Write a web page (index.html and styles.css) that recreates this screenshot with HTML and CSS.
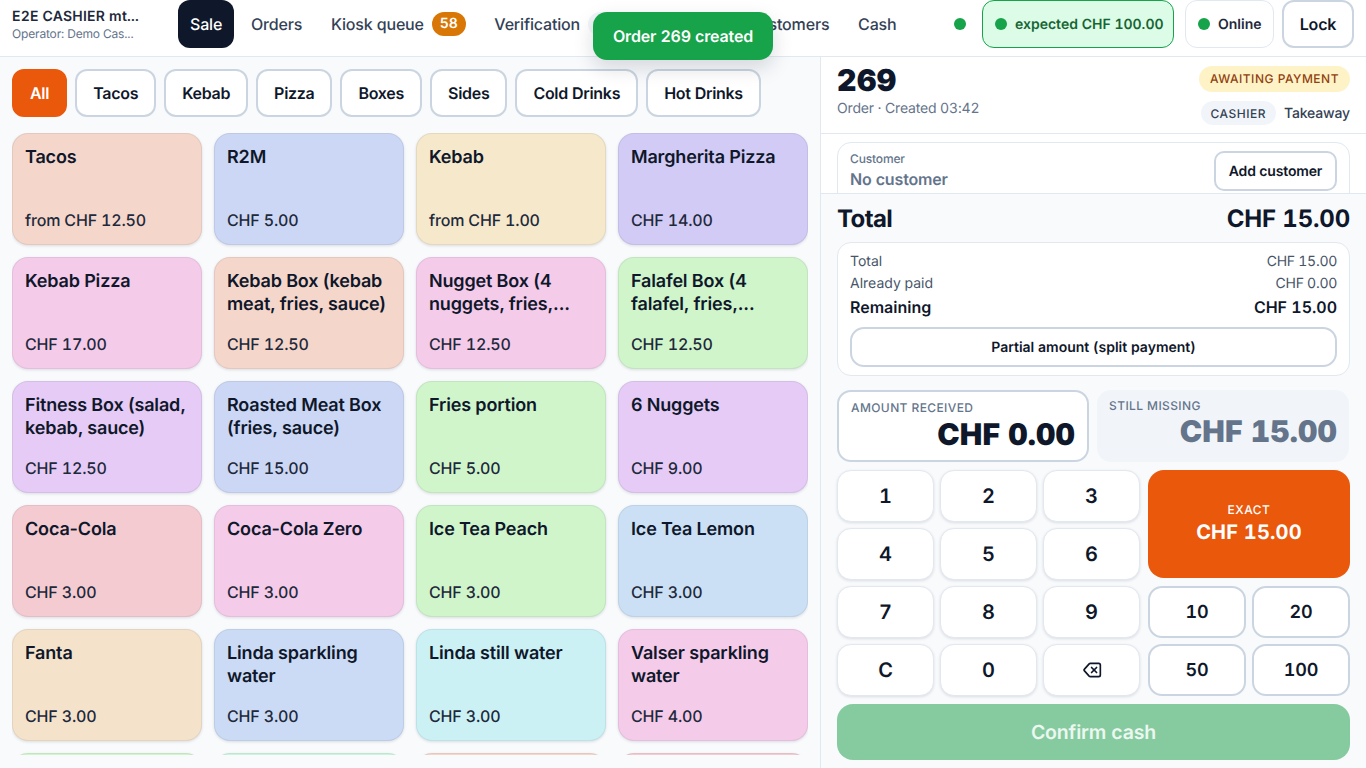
FILE: index.html
```html
<!DOCTYPE html>
<html lang="en">
<head>
    <meta charset="UTF-8">
    <meta name="viewport" content="width=device-width, initial-scale=1.0">
    <title>Cashier</title>
    <link rel="stylesheet" href="styles.css">
</head>
<body>
    <header class="topbar">
        <div class="brand">
            <div class="brand-name">E2E CASHIER mt...</div>
            <div class="brand-operator">Operator: Demo Cas...</div>
        </div>
        <nav class="nav">
            <a class="nav-item active">Sale</a>
            <a class="nav-item">Orders</a>
            <a class="nav-item">Kiosk queue <span class="count">58</span></a>
            <a class="nav-item">Verification <span class="count muted"></span></a>
            <a class="nav-item nav-covered"></a>
            <a class="nav-item">Customers</a>
            <a class="nav-item">Cash</a>
        </nav>
        <div class="status">
            <span class="dot sync-dot"></span>
            <div class="pill pill-cash"><span class="dot"></span>expected CHF 100.00</div>
            <div class="pill pill-online"><span class="dot"></span>Online</div>
            <button class="lock">Lock</button>
        </div>
    </header>

    <div class="toast">Order 269 created</div>

    <main class="layout">
        <section class="catalog">
            <div class="chips">
                <button class="chip active">All</button>
                <button class="chip">Tacos</button>
                <button class="chip">Kebab</button>
                <button class="chip">Pizza</button>
                <button class="chip">Boxes</button>
                <button class="chip">Sides</button>
                <button class="chip">Cold Drinks</button>
                <button class="chip">Hot Drinks</button>
            </div>
            <div class="products">
                <div class="product peach"><div class="product-name">Tacos</div><div class="product-price">from CHF 12.50</div></div>
                <div class="product blue"><div class="product-name">R2M</div><div class="product-price">CHF 5.00</div></div>
                <div class="product sand"><div class="product-name">Kebab</div><div class="product-price">from CHF 1.00</div></div>
                <div class="product violet"><div class="product-name">Margherita Pizza</div><div class="product-price">CHF 14.00</div></div>

                <div class="product pink"><div class="product-name">Kebab Pizza</div><div class="product-price">CHF 17.00</div></div>
                <div class="product peach"><div class="product-name">Kebab Box (kebab meat, fries, sauce)</div><div class="product-price">CHF 12.50</div></div>
                <div class="product pink"><div class="product-name">Nugget Box (4 nuggets, fries,...</div><div class="product-price">CHF 12.50</div></div>
                <div class="product green"><div class="product-name">Falafel Box (4 falafel, fries,...</div><div class="product-price">CHF 12.50</div></div>

                <div class="product lilac"><div class="product-name">Fitness Box (salad, kebab, sauce)</div><div class="product-price">CHF 12.50</div></div>
                <div class="product blue"><div class="product-name">Roasted Meat Box (fries, sauce)</div><div class="product-price">CHF 15.00</div></div>
                <div class="product green"><div class="product-name">Fries portion</div><div class="product-price">CHF 5.00</div></div>
                <div class="product lilac"><div class="product-name">6 Nuggets</div><div class="product-price">CHF 9.00</div></div>

                <div class="product rose"><div class="product-name">Coca-Cola</div><div class="product-price">CHF 3.00</div></div>
                <div class="product pink"><div class="product-name">Coca-Cola Zero</div><div class="product-price">CHF 3.00</div></div>
                <div class="product green"><div class="product-name">Ice Tea Peach</div><div class="product-price">CHF 3.00</div></div>
                <div class="product sky"><div class="product-name">Ice Tea Lemon</div><div class="product-price">CHF 3.00</div></div>

                <div class="product orange"><div class="product-name">Fanta</div><div class="product-price">CHF 3.00</div></div>
                <div class="product sky2"><div class="product-name">Linda sparkling water</div><div class="product-price">CHF 3.00</div></div>
                <div class="product cyan"><div class="product-name">Linda still water</div><div class="product-price">CHF 3.00</div></div>
                <div class="product pink"><div class="product-name">Valser sparkling water</div><div class="product-price">CHF 4.00</div></div>

                <div class="product green"></div>
                <div class="product mint"></div>
                <div class="product peach"></div>
                <div class="product rose"></div>
            </div>
        </section>

        <aside class="order">
            <div class="order-head">
                <div>
                    <div class="order-number">269</div>
                    <div class="order-meta">Order · Created 03:42</div>
                </div>
                <div class="order-tags">
                    <span class="tag-status">AWAITING PAYMENT</span>
                    <div class="order-channel">
                        <span class="tag-channel">CASHIER</span>
                        <span class="order-type">Takeaway</span>
                    </div>
                </div>
            </div>

            <div class="customer-wrap">
                <div class="customer">
                    <div>
                        <div class="customer-label">Customer</div>
                        <div class="customer-name">No customer</div>
                    </div>
                    <button class="add-customer">Add customer</button>
                </div>
            </div>

            <div class="payment">
                <div class="total-row">
                    <span class="total-label">Total</span>
                    <span>CHF 15.00</span>
                </div>
                <div class="summary">
                    <div class="summary-row"><span>Total</span><span class="summary-value">CHF 15.00</span></div>
                    <div class="summary-row"><span>Already paid</span><span class="summary-value">CHF 0.00</span></div>
                    <div class="summary-row strong"><span>Remaining</span><span>CHF 15.00</span></div>
                    <button class="split">Partial amount (split payment)</button>
                </div>
                <div class="amounts">
                    <div class="amount received">
                        <div class="amount-label">AMOUNT RECEIVED</div>
                        <div class="amount-value">CHF 0.00</div>
                    </div>
                    <div class="amount missing">
                        <div class="amount-label">STILL MISSING</div>
                        <div class="amount-value">CHF 15.00</div>
                    </div>
                </div>
                <div class="keypad">
                    <div class="digits">
                        <button class="key">1</button>
                        <button class="key">2</button>
                        <button class="key">3</button>
                        <button class="key">4</button>
                        <button class="key">5</button>
                        <button class="key">6</button>
                        <button class="key">7</button>
                        <button class="key">8</button>
                        <button class="key">9</button>
                        <button class="key">C</button>
                        <button class="key">0</button>
                        <button class="key">
                            <svg width="20" height="20" viewBox="0 0 24 24" fill="none" stroke="#0f172a" stroke-width="2" stroke-linecap="round" stroke-linejoin="round">
                                <path d="M10 4a2 2 0 0 0-1.4.6L2.7 11.3a1 1 0 0 0 0 1.4l5.9 6.7A2 2 0 0 0 10 20h10a2 2 0 0 0 2-2V6a2 2 0 0 0-2-2z"/>
                                <path d="m11.5 9 6 6"/>
                                <path d="m17.5 9-6 6"/>
                            </svg>
                        </button>
                    </div>
                    <div class="quick">
                        <button class="exact">
                            <span class="exact-label">EXACT</span>
                            <span class="exact-value">CHF 15.00</span>
                        </button>
                        <button class="note">10</button>
                        <button class="note">20</button>
                        <button class="note">50</button>
                        <button class="note">100</button>
                    </div>
                </div>
                <button class="confirm">Confirm cash</button>
            </div>
        </aside>
    </main>
</body>
</html>
```

FILE: styles.css
```css
* {
    box-sizing: border-box;
}
html, body {
    height: 100%;
}
body {
    margin: 0;
    height: 768px;
    overflow: hidden;
    font-family: Inter, "Noto Sans", sans-serif;
    font-variant-numeric: tabular-nums;
    text-rendering: geometricPrecision;
    letter-spacing: -0.01em;
    color: #0f172a;
    background-color: #f8fafc;
}
button {
    font-family: inherit;
    font-variant-numeric: inherit;
    text-rendering: inherit;
    letter-spacing: inherit;
    color: inherit;
    cursor: pointer;
}

/* top bar */
.topbar {
    display: flex;
    align-items: flex-start;
    height: 57px;
    padding: 0 12px;
    background-color: #ffffff;
    border-bottom: 1px solid #e2e8f0;
}
.brand {
    width: 166px;
    padding-top: 8px;
}
.brand-name {
    font-size: 14px;
    line-height: 17px;
    font-weight: 600;
    letter-spacing: 0.015em;
    color: #1e293b;
}
.brand-operator {
    margin-top: 1px;
    font-size: 12px;
    line-height: 16px;
    color: #64748b;
}
.nav {
    display: flex;
    gap: 4.7px;
}
.nav-item {
    display: flex;
    align-items: center;
    gap: 8px;
    height: 48px;
    padding: 0 12px 1px;
    border-radius: 12px;
    font-size: 16px;
    font-weight: 500;
    color: #334155;
    white-space: nowrap;
}
.nav-item.active {
    background-color: #0f172a;
    color: #ffffff;
}
.nav-covered {
    width: 100px;
}
.count {
    padding: 0 8px;
    height: 24px;
    line-height: 24px;
    border-radius: 12px;
    background-color: #d97706;
    color: #ffffff;
    font-size: 14px;
    font-weight: 600;
}
.count.muted {
    width: 26px;
    background-color: #f1f5f9;
}
.status {
    display: flex;
    align-items: center;
    margin-left: auto;
    height: 48px;
}
.dot {
    display: block;
    width: 12px;
    height: 12px;
    border-radius: 50%;
    background-color: #16a34a;
}
.sync-dot {
    margin-right: 16px;
}
.pill {
    display: flex;
    align-items: center;
    gap: 8px;
    height: 48px;
    border-radius: 12px;
    font-size: 14px;
    font-weight: 600;
    letter-spacing: 0;
}
.pill-cash {
    width: 192px;
    padding-left: 12px;
    margin-right: 11px;
    background-color: #dcfce7;
    border: 1px solid #16a34a;
    color: #166534;
}
.pill-online {
    width: 89px;
    padding-left: 12px;
    margin-right: 8px;
    background-color: #ffffff;
    border: 1px solid #e2e8f0;
    color: #1e293b;
}
.lock {
    height: 48px;
    width: 72px;
    background-color: #ffffff;
    border: 2px solid #cbd5e1;
    border-radius: 12px;
    font-size: 16px;
    font-weight: 600;
}
.toast {
    position: absolute;
    top: 12px;
    left: 593px;
    width: 180px;
    height: 48px;
    line-height: 48px;
    text-align: center;
    background-color: #16a34a;
    color: #ffffff;
    border-radius: 14px;
    font-size: 16px;
    font-weight: 600;
    box-shadow: 0 8px 20px rgba(15, 23, 42, 0.15);
}

/* main columns */
.layout {
    display: flex;
    height: 711px;
}
.catalog {
    width: 821px;
    padding: 12px 12px 13px;
    border-right: 1px solid #e2e8f0;
    display: flex;
    flex-direction: column;
    gap: 16px;
}
.chips {
    display: flex;
    gap: 8px;
}
.chip {
    height: 48px;
    padding: 0 16px;
    background-color: #ffffff;
    border: 2px solid #cbd5e1;
    border-radius: 12px;
    font-size: 16px;
    font-weight: 600;
    letter-spacing: -0.018em;
}
.chip.active {
    background-color: #ea580c;
    border-color: #ea580c;
    color: #ffffff;
}
.products {
    flex: 1;
    min-height: 0;
    overflow: hidden;
    display: grid;
    grid-template-columns: repeat(4, 190px);
    grid-auto-rows: 112px;
    gap: 12px;
}
.product {
    display: flex;
    flex-direction: column;
    justify-content: space-between;
    padding: 12px 12px 14px;
    border: 1px solid rgba(15, 23, 42, 0.07);
    border-radius: 16px;
    box-shadow: 0 1px 3px rgba(15, 23, 42, 0.12);
}
.product-name {
    font-size: 18px;
    line-height: 23px;
    font-weight: 600;
    font-variant-numeric: normal;
    color: #0f172a;
}
.product-price {
    font-size: 16px;
    line-height: 20px;
    font-weight: 500;
    color: #1e293b;
}
.peach { background-color: #f5d6cb; }
.blue { background-color: #ccd7f5; }
.sand { background-color: #f5e8cb; }
.violet { background-color: #d2cbf5; }
.pink { background-color: #f5cbea; }
.green { background-color: #d0f5cb; }
.lilac { background-color: #e5cbf5; }
.rose { background-color: #f5cbd2; }
.sky { background-color: #cbe0f5; }
.sky2 { background-color: #cbdbf5; }
.orange { background-color: #f5e2cb; }
.cyan { background-color: #cbf1f5; }
.mint { background-color: #cbf5dd; }

/* order column */
.order {
    flex: 1;
    min-width: 0;
    display: flex;
    flex-direction: column;
}
.order-head {
    display: flex;
    justify-content: space-between;
    height: 77px;
    padding: 7px 16px 0;
    background-color: #ffffff;
    border-bottom: 1px solid #e2e8f0;
}
.order-number {
    font-size: 30px;
    line-height: 30px;
    font-weight: 900;
    letter-spacing: 0.02em;
    margin-top: 2px;
}
.order-meta {
    margin-top: 3px;
    font-size: 14px;
    line-height: 20px;
    color: #64748b;
}
.order-tags {
    display: flex;
    flex-direction: column;
    align-items: flex-end;
    gap: 9px;
    margin-top: 2px;
}
.tag-status {
    height: 26px;
    line-height: 25px;
    padding: 0 11px;
    border-radius: 13px;
    background-color: #fef3c7;
    color: #92400e;
    font-size: 12px;
    font-weight: 500;
    letter-spacing: 0.5px;
}
.order-channel {
    display: flex;
    align-items: center;
    gap: 8px;
}
.tag-channel {
    height: 24px;
    line-height: 25px;
    padding: 0 10px;
    border-radius: 12px;
    background-color: #f1f5f9;
    color: #334155;
    font-size: 12px;
    font-weight: 500;
    letter-spacing: 0.5px;
}
.order-type {
    font-size: 14px;
    line-height: 20px;
    margin-top: 2px;
    font-weight: 500;
    color: #334155;
}
.customer-wrap {
    height: 60px;
    padding: 8px 16px 0;
    overflow: hidden;
    background-color: #ffffff;
    border-bottom: 1px solid #e2e8f0;
}
.customer {
    display: flex;
    justify-content: space-between;
    align-items: flex-start;
    height: 64px;
    padding: 8px 12px;
    border: 1px solid #e2e8f0;
    border-radius: 14px;
}
.customer-label {
    font-size: 12px;
    line-height: 16px;
    font-weight: 500;
    color: #64748b;
}
.customer-name {
    margin-top: 2px;
    font-size: 16px;
    line-height: 20px;
    font-weight: 600;
    color: #64748b;
}
.add-customer {
    height: 40px;
    padding: 0;
    width: 123px;
    background-color: #ffffff;
    border: 2px solid #cbd5e1;
    border-radius: 10px;
    font-size: 14px;
    font-weight: 600;
}
.payment {
    flex: 1;
    min-height: 0;
    padding: 8px 16px;
    display: flex;
    flex-direction: column;
}
.total-row {
    display: flex;
    justify-content: space-between;
    align-items: center;
    height: 32px;
    font-size: 24px;
    font-weight: 700;
    margin-bottom: 8px;
}
.total-label {
    letter-spacing: -0.025em;
}
.summary {
    height: 134px;
    padding: 8px 12px;
    background-color: #ffffff;
    border: 1px solid #e2e8f0;
    border-radius: 14px;
}
.summary-row {
    display: flex;
    justify-content: space-between;
    height: 22px;
    line-height: 22px;
    font-size: 14px;
    letter-spacing: 0;
    color: #475569;
}
.summary-value {
    letter-spacing: -0.02em;
}
.summary-row.strong {
    height: 24px;
    line-height: 24px;
    font-size: 16px;
    font-weight: 600;
    color: #0f172a;
}
.split {
    display: block;
    width: 100%;
    height: 40px;
    margin-top: 8px;
    padding: 0;
    background-color: #ffffff;
    border: 2px solid #cbd5e1;
    border-radius: 14px;
    font-size: 14px;
    font-weight: 600;
    letter-spacing: 0;
}
.amounts {
    display: grid;
    grid-template-columns: 252px 252px;
    gap: 8px;
    margin-top: 14px;
}
.amount {
    height: 72px;
    padding: 8px 12px;
    border-radius: 14px;
}
.amount.received {
    background-color: #ffffff;
    border: 2px solid #cbd5e1;
}
.amount.received .amount-value {
    margin-top: 1px;
}
.amount.missing {
    background-color: #f1f5f9;
    color: #64748b;
}
.amount-label {
    font-size: 12px;
    line-height: 16px;
    font-weight: 500;
    letter-spacing: 0.4px;
    color: #64748b;
}
.amount-value {
    text-align: right;
    font-size: 30px;
    line-height: 36px;
    font-weight: 900;
    letter-spacing: 0.15px;
}
.keypad {
    display: flex;
    gap: 8px;
    margin-top: 8px;
}
.digits {
    display: grid;
    grid-template-columns: repeat(3, 97px);
    grid-auto-rows: 52px;
    column-gap: 6px;
    row-gap: 6px;
}
.key {
    display: flex;
    align-items: center;
    justify-content: center;
    background-color: #ffffff;
    border: 1px solid #e2e8f0;
    border-radius: 14px;
    box-shadow: 0 1px 3px rgba(15, 23, 42, 0.12);
    font-size: 20px;
    font-weight: 600;
}
.quick {
    flex: 1;
    display: grid;
    grid-template-columns: 1fr 1fr;
    grid-auto-rows: 52px;
    column-gap: 6px;
    row-gap: 6px;
}
.exact {
    grid-column: span 2;
    grid-row: span 2;
    height: 108px;
    display: flex;
    flex-direction: column;
    align-items: center;
    justify-content: center;
    gap: 1px;
    padding: 0 0 1px;
    background-color: #ea580c;
    border: none;
    border-radius: 16px;
    color: #ffffff;
}
.exact-label {
    font-size: 12px;
    line-height: 16px;
    font-weight: 500;
    letter-spacing: 0.5px;
}
.exact-value {
    font-size: 20px;
    line-height: 26px;
    font-weight: 700;
    letter-spacing: 0.01em;
}
.note {
    background-color: #ffffff;
    border: 2px solid #cbd5e1;
    border-radius: 14px;
    font-size: 18px;
    font-weight: 600;
}
.confirm {
    height: 56px;
    margin-top: 8px;
    background-color: #86cba0;
    border: none;
    border-radius: 16px;
    color: #ecf7f0;
    font-size: 19.5px;
    font-weight: 600;
}
```
